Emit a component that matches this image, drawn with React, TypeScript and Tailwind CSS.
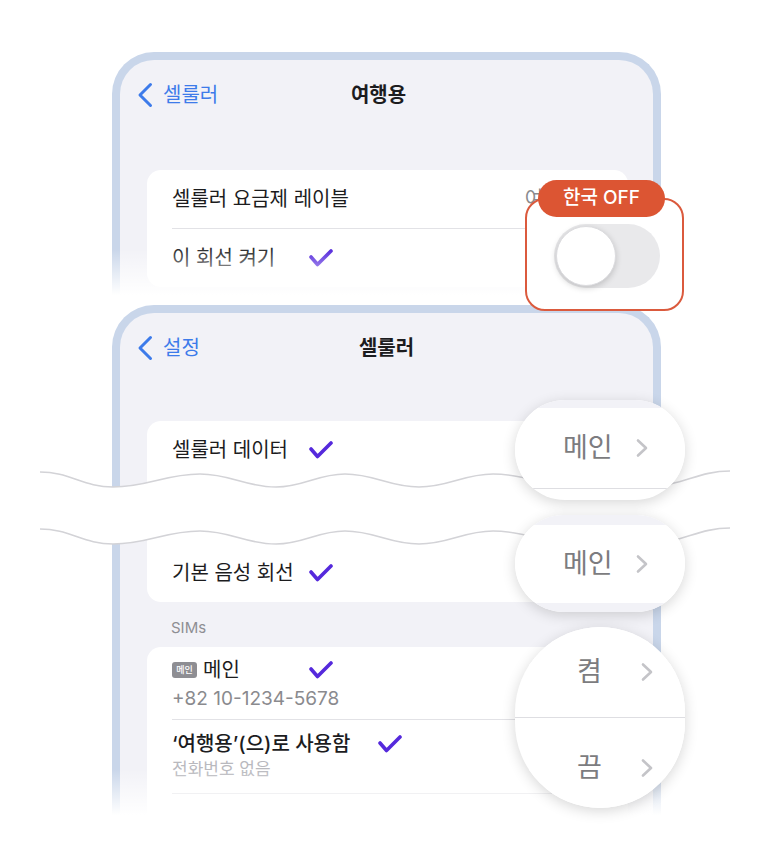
import type { ReactNode } from "react";

type Pt = [number, number];

// crest / trough points of the "torn" break line
const wavePts: Pt[] = [
  [40, 472], [113, 487], [200, 474], [276, 487], [345, 474],
  [419, 487], [493, 474], [580, 487], [650, 486], [730, 471],
];

function segs(pts: Pt[], dy: number) {
  let d = "";
  for (let i = 1; i < pts.length; i++) {
    const [x0, y0] = pts[i - 1];
    const [x1, y1] = pts[i];
    const k = (x1 - x0) * 0.4;
    d += ` C${x0 + k} ${y0 + dy} ${x1 - k} ${y1 + dy} ${x1} ${y1 + dy}`;
  }
  return d;
}

const GAP = 57;
const topLine = `M${wavePts[0][0]} ${wavePts[0][1]}` + segs(wavePts, 0);
const rev = [...wavePts].reverse();
const botLine = `M${wavePts[0][0]} ${wavePts[0][1] + GAP}` + segs(wavePts, GAP);
const fill =
  topLine + ` L${rev[0][0]} ${rev[0][1] + GAP}` + segs(rev, GAP) + " Z";

function Check() {
  return (
    <svg width="24" height="18" viewBox="0 0 24 18" className="shrink-0">
      <path
        d="M2 8 L8.5 15.5 L22 2"
        fill="none"
        stroke="#5529dc"
        strokeWidth="3.6"
        strokeLinecap="round"
        strokeLinejoin="round"
      />
    </svg>
  );
}

function Back() {
  return (
    <svg width="16" height="26" viewBox="0 0 16 26">
      <path
        d="M13.5 2.5 L3 13 L13.5 23.5"
        fill="none"
        stroke="#3d7bea"
        strokeWidth="3"
        strokeLinecap="round"
        strokeLinejoin="round"
      />
    </svg>
  );
}

function Chevron() {
  return (
    <svg width="14" height="20" viewBox="0 0 14 20">
      <path
        d="M3 2.5 L11 10 L3 17.5"
        fill="none"
        stroke="#c4c4c8"
        strokeWidth="2.6"
        strokeLinecap="round"
        strokeLinejoin="round"
      />
    </svg>
  );
}

function Frame({ box, children }: { box: string; children: ReactNode }) {
  return (
    <div className={`relative w-[549px] ${box}`}>
      <div className="h-full overflow-hidden rounded-t-[42px] border-8 border-b-0 border-[#c9d6ea] bg-[#f2f2f7]">
        {children}
      </div>
      <div className="absolute inset-x-0 bottom-0 h-[46px] bg-linear-to-b from-white/0 to-white" />
    </div>
  );
}

function Nav({ back, title, shift }: { back: string; title: string; shift: string }) {
  return (
    <div className="grid h-[70px] grid-cols-[1fr_auto_1fr] items-center">
      <div className="flex items-center gap-[10px] pl-[17px] text-[20px] text-[#3d7bea]">
        <Back />
        <span>{back}</span>
      </div>
      <div className={`text-[20px] font-bold ${shift}`}>{title}</div>
      <div />
    </div>
  );
}

function Pill({ className, children }: { className: string; children: ReactNode }) {
  return (
    <div
      className={`absolute left-[515px] w-[170px] overflow-hidden rounded-full bg-white shadow-[0_3px_14px_rgba(0,0,0,0.16)] ${className}`}
    >
      {children}
    </div>
  );
}

function PillRow({ text, h, w }: { text: string; h: string; w: string }) {
  return (
    <div className={`flex items-center bg-white pl-[48px] text-[27px] text-[#7c7c80] ${h}`}>
      <span className={w}>{text}</span>
      <Chevron />
    </div>
  );
}

export default function App() {
  return (
    <div className="relative h-[849px] w-[773px] overflow-hidden bg-white font-[Inter,'Noto_Sans_CJK_KR',sans-serif] text-[#1c1c1e]">
      <div className="pl-[112px] pt-[52px]">
        {/* 여행용 screen */}
        <Frame box="h-[243px]">
          <Nav back="셀룰러" title="여행용" shift="-translate-x-[8px]" />
          <div className="ml-[27px] mr-[25px] mt-[40px] rounded-[14px] bg-white text-[20px]">
            <div className="flex h-[58px] items-center justify-between pl-[25px] pr-[48px]">
              <span>셀룰러 요금제 레이블</span>
              <span className="text-[#8a8a8e]">여행용</span>
            </div>
            <div className="ml-[25px] h-px bg-[#e2e2e6]" />
            <div className="flex h-[58px] items-center pl-[25px]">
              <span className="w-[137px] text-[#2c2c2e]">이 회선 켜기</span>
              <Check />
            </div>
          </div>
        </Frame>

        {/* 셀룰러 screen */}
        <div className="mt-[10px]">
          <Frame box="h-[510px]">
            <Nav back="설정" title="셀룰러" shift="" />
            <div className="ml-[27px] mr-[25px] mt-[38px] rounded-[14px] bg-white text-[20px]">
              <div className="flex h-[58px] items-center pl-[25px]">
                <span className="w-[137px]">셀룰러 데이터</span>
                <Check />
              </div>
              <div className="h-[65px]" />
              <div className="flex h-[58px] items-center pl-[25px]">
                <span className="w-[137px]">기본 음성 회선</span>
                <Check />
              </div>
            </div>
            <div className="ml-[27px] flex h-[45px] items-center pl-[24px] pt-[7px] text-[15px] text-[#8e8e93]">
              SIMs
            </div>
            <div className="ml-[27px] mr-[25px] rounded-[14px] bg-white">
              <div className="h-[72px] pl-[25px] pt-[10px]">
                <div className="flex h-[26px] items-center">
                  <span className="flex w-[137px] items-center gap-[6px]">
                    <span className="flex h-[16px] w-[25px] items-center justify-center rounded-[3px] bg-[#8e8e93] text-[9px] font-medium text-white">
                      메인
                    </span>
                    <span className="text-[20px]">메인</span>
                  </span>
                  <Check />
                </div>
                <div className="mt-[2px] flex h-[28px] items-center text-[19px] text-[#8a8a8e]">
                  +82 10-1234-5678
                </div>
              </div>
              <div className="ml-[25px] h-px bg-[#e2e2e6]" />
              <div className="h-[73px] pl-[25px] pt-[11px]">
                <div className="flex h-[26px] items-center">
                  <span className="w-[206px] text-[20px] font-medium">‘여행용’(으)로 사용함</span>
                  <Check />
                </div>
                <div className="flex h-[26px] items-center text-[17px] text-[#b9b9be]">
                  전화번호 없음
                </div>
              </div>
              <div className="ml-[25px] h-px bg-[#e2e2e6]" />
              <div className="h-[40px]" />
            </div>
          </Frame>
        </div>
      </div>

      {/* torn break between rows */}
      <svg
        className="pointer-events-none absolute left-0 top-0"
        width="773"
        height="849"
        viewBox="0 0 773 849"
      >
        <path d={fill} fill="#ffffff" />
        <path d={topLine} fill="none" stroke="#d3d3d7" strokeWidth="1.6" />
        <path d={botLine} fill="none" stroke="#d3d3d7" strokeWidth="1.6" />
      </svg>

      {/* 한국 OFF toggle callout */}
      <div className="absolute left-[525px] top-[198px] h-[113px] w-[159px] rounded-[20px] border-2 border-[#db5a3d] bg-white pl-[27px] pt-[24px]">
        <div className="h-[64px] w-[106px] rounded-full bg-[#e9e9eb] p-[2px]">
          <div className="h-[60px] w-[60px] rounded-full border border-[#dcdcdf] bg-white shadow-[0_2px_6px_rgba(0,0,0,0.18)]" />
        </div>
      </div>
      <div className="absolute left-[538px] top-[180px] flex h-[37px] w-[127px] items-center justify-center rounded-full bg-[#dc5533] text-[19px] font-medium text-white">
        한국 OFF
      </div>

      {/* magnified values */}
      <Pill className="top-[400px] h-[100px]">
        <div className="h-[8px] bg-[#f2f2f7]" />
        <PillRow text="메인" h="h-[80px]" w="w-[72px]" />
        <div className="h-px bg-[#dedee2]" />
      </Pill>
      <Pill className="top-[515px] h-[97px]">
        <div className="h-[10px] bg-[#f2f2f7]" />
        <PillRow text="메인" h="h-[78px]" w="w-[72px]" />
        <div className="h-[9px] bg-[#f2f2f7]" />
      </Pill>
      <Pill className="top-[627px] h-[181px]">
        <div className="pl-[14px]">
          <PillRow text="켬" h="h-[90px]" w="w-[63px]" />
        </div>
        <div className="h-px bg-[#dedee2]" />
        <div className="pl-[14px] pt-[6px]">
          <PillRow text="끔" h="h-[88px]" w="w-[63px]" />
        </div>
      </Pill>
    </div>
  );
}
